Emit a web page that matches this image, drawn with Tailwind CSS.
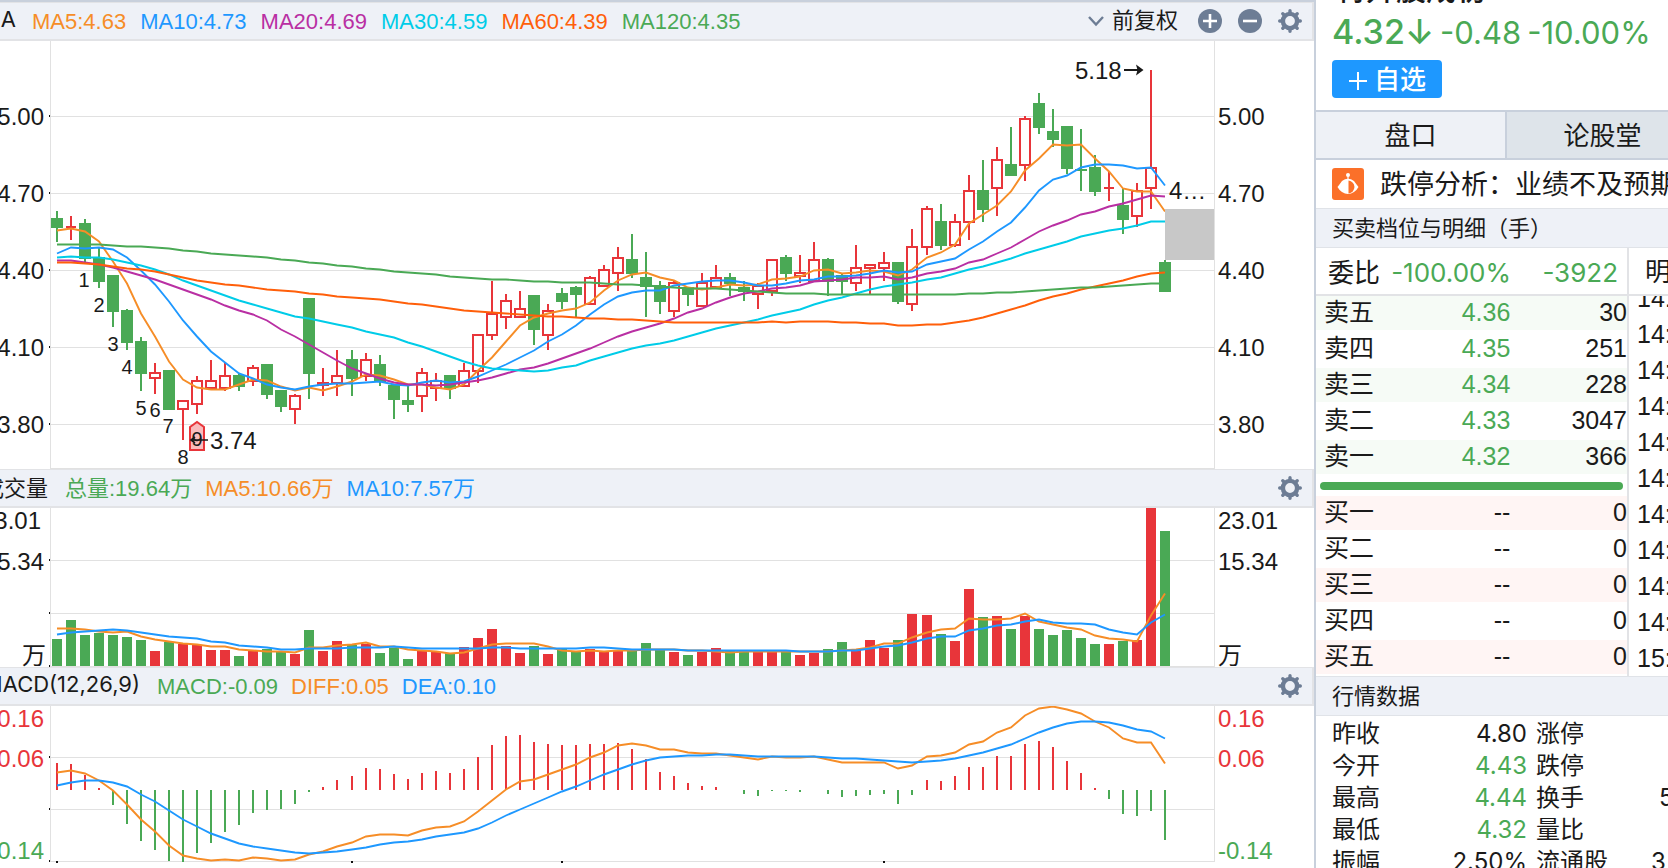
<!DOCTYPE html>
<html lang="zh-CN">
<head>
<meta charset="utf-8">
<title>4.32 -10.00%</title>
<script src="https://cdn.jsdelivr.net/npm/@tailwindcss/browser@4"></script>
</head>
<body class="h-screen overflow-hidden bg-white text-[#1a1a1a] font-['Liberation_Sans','Noto_Sans_CJK_SC',sans-serif]">
<svg class="hidden" aria-hidden="true">
  <symbol id="gear" viewBox="0 0 24 24">
    <circle cx="12" cy="12" r="7.1" fill="none" stroke="#6d7d95" stroke-width="4.4"/>
    <g stroke="#6d7d95" stroke-width="3.4" stroke-linecap="round">
      <path d="M12 1.700V4M12 20v2.300M1.700 12H4M20 12h2.300M4.800 4.800l1.500 1.500M17.700 17.700l1.500 1.500M4.800 19.200l1.500-1.500M17.700 6.300l1.500-1.500"/>
    </g>
  </symbol>
</svg>
<div class="flex h-full">
  <main class="min-w-0 flex-1 border-t-2 border-[#c8d0dc]">
    <header class="flex h-[39px] items-center border-t border-r-2 border-b-2 border-[#e2e3e6] bg-[#eef1f7] pr-[10px] text-[22px]">
      <h2 class="flex w-4 justify-end overflow-hidden pb-[3px] font-['Inter','Noto_Sans_CJK_SC',sans-serif]">MA</h2>
      <div class="ml-4 flex flex-1 gap-[14px] whitespace-nowrap">
        <span class="text-[#f68d27]">MA5:4.63</span>
        <span class="text-[#1e98ff]">MA10:4.73</span>
        <span class="text-[#b92fa3]">MA20:4.69</span>
        <span class="text-[#00cce8]">MA30:4.59</span>
        <span class="text-[#ff5f0a]">MA60:4.39</span>
        <span class="text-[#4aa955]">MA120:4.35</span>
      </div>
      <button class="flex items-center gap-2 leading-[30px]">
        <svg class="h-3 w-4" viewBox="0 0 16 12" fill="none" stroke="#6d7d95" stroke-width="2.4"><path d="M1 2l7 7.500L15 2"/></svg>前复权
      </button>
      <button class="ml-5" aria-label="放大"><svg class="h-6 w-6" viewBox="0 0 24 24"><circle cx="12" cy="12" r="12" fill="#6d7d95"/><path d="M5 12h14M12 5v14" stroke="#fff" stroke-width="2.600"/></svg></button>
      <button class="ml-4" aria-label="缩小"><svg class="h-6 w-6" viewBox="0 0 24 24"><circle cx="12" cy="12" r="12" fill="#6d7d95"/><path d="M5 12h14" stroke="#fff" stroke-width="2.600"/></svg></button>
      <button class="ml-4" aria-label="设置"><svg class="h-6 w-6"><use href="#gear"/></svg></button>
    </header>
    <svg id="price" class="block w-full" viewBox="0 41 1314 428" font-size="24" fill="#1a1a1a"></svg>

    <header class="flex h-[39px] items-center border-t border-r-2 border-b-2 border-[#e2e3e6] bg-[#eef1f7] pr-[10px] text-[22px]">
      <h2 class="flex w-12 justify-end overflow-hidden whitespace-nowrap">成交量</h2>
      <div class="ml-[17px] flex flex-1 gap-[13px] whitespace-nowrap">
        <span class="text-[#4aa955]">总量:19.64万</span>
        <span class="text-[#f68d27]">MA5:10.66万</span>
        <span class="text-[#1e98ff]">MA10:7.57万</span>
      </div>
      <button aria-label="设置"><svg class="h-6 w-6"><use href="#gear"/></svg></button>
    </header>
    <svg id="volume" class="block w-full" viewBox="0 508 1314 159" font-size="24" fill="#1a1a1a"></svg>

    <header class="flex h-[39px] items-center border-t border-r-2 border-b-2 border-[#e2e3e6] bg-[#eef1f7] pr-[10px] text-[22px]">
      <h2 class="flex w-[140px] justify-end overflow-hidden pb-[3px] whitespace-nowrap font-['Inter','Noto_Sans_CJK_SC',sans-serif]">MACD(12,26,9)</h2>
      <div class="ml-[17px] flex flex-1 gap-[13px] whitespace-nowrap">
        <span class="text-[#4aa955]">MACD:-0.09</span>
        <span class="text-[#f68d27]">DIFF:0.05</span>
        <span class="text-[#1e98ff]">DEA:0.10</span>
      </div>
      <button aria-label="设置"><svg class="h-6 w-6"><use href="#gear"/></svg></button>
    </header>
    <svg id="macd" class="block w-full" viewBox="0 706 1314 162" font-size="24" fill="#1a1a1a"></svg>
  </main>

  <aside class="w-[354px] shrink-0 overflow-hidden border-l-2 border-[#c8d0dc]">
    <div class="flex h-[110px] flex-col px-4 whitespace-nowrap">
      <h1 class="flex h-[3px] items-end overflow-hidden pl-1 text-[30px] leading-[26px] font-medium">特升股成初</h1>
      <div class="mt-[7px] flex items-baseline gap-[6px] font-['Inter','Noto_Sans_CJK_SC',sans-serif] leading-[44px] text-[#4aa955]">
        <span class="text-[34px] font-medium">4.32↓</span>
        <span class="text-[31px]">-0.48</span>
        <span class="text-[31px]">-10.00%</span>
      </div>
      <button class="mt-[5px] flex h-[38px] w-[110px] items-center justify-center gap-[6px] rounded bg-[#1e98ff] pt-[3px] text-[26px] leading-[35px] font-medium text-white">
        <svg class="h-5 w-5" viewBox="0 0 20 20" stroke="#fff" stroke-width="2"><path d="M1 10h18M10 1v18"/></svg>自选
      </button>
    </div>
    <nav class="flex border-y-2 border-[#c8d0dc] text-[26px] leading-[44px]">
      <a href="#" class="w-[191px] shrink-0 border-r-2 border-[#c8d0dc] bg-[#eef1f6] pt-[2px] text-center">盘口</a>
      <a href="#" class="w-[191px] shrink-0 bg-[#dee4ea] pt-[2px] text-center">论股堂</a>
    </nav>
    <a href="#" class="flex h-12 items-center gap-4 px-4 text-[27px] leading-10 whitespace-nowrap">
      <svg class="h-8 w-8 shrink-0" viewBox="0 0 32 32"><rect width="32" height="32" rx="3" fill="#fb7029"/><circle cx="16" cy="7" r="2" fill="#fff"/><path d="M16 7v5" stroke="#fff" stroke-width="1.200"/><path d="M10 13q6-4.500 12 0 2.500 3.500 4.500 6-2 3.500-4.500 5-6 4-12 0-2.500-1.500-4.500-5 2-2.500 4.500-6z" fill="#fff"/><path d="M16.500 12.500q5.500 1 6 6.500-.5 5.500-6 6.500z" fill="#fb7029"/></svg>
      <span class="pt-[2px]">跌停分析：业绩不及预期</span>
    </a>
    <h3 class="h-10 border-y border-[#e0e3e8] bg-[#eef1f7] px-4 text-[22px] leading-10 whitespace-nowrap">买卖档位与明细（手）</h3>
    <div class="flex whitespace-nowrap">
      <section class="w-[313px] shrink-0 border-r-2 border-[#e2e3e6]">
        <div class="flex h-12 items-center border-b-2 border-[#e2e3e6] pt-[3px] pr-[9px] pl-3 font-['Inter','Noto_Sans_CJK_SC',sans-serif] text-[26px] leading-[43px]">
          <span>委比</span><span class="flex-1 text-right text-[#4aa955]">-100.00%</span><span class="w-[107px] text-right text-[#4aa955]">-3922</span>
        </div>
        <table class="w-full table-fixed text-[25px] leading-[32px]"><tbody id="asks"></tbody></table>
        <div class="mx-1 mt-[6px] mb-[6px] h-2 rounded-full bg-[#4aa955]"></div>
        <table class="w-full table-fixed text-[25px] leading-[32px]"><tbody id="bids"></tbody></table>
      </section>
      <section class="min-w-0 flex-1 overflow-hidden">
        <div class="h-12 border-b-2 border-[#e2e3e6] pt-[3px] pl-4 text-[26px] leading-[43px]">明细</div>
        <ol id="ticks" class="flex h-[380px] flex-col justify-end overflow-hidden pl-2 text-[25px] leading-9"></ol>
      </section>
    </div>
    <h3 class="h-10 border-y border-[#e0e3e8] bg-[#eef1f7] px-4 text-[22px] leading-10">行情数据</h3>
    <dl id="stats" class="grid grid-cols-[80px_115px_132px_100px] pt-[2px] pl-4 font-['Inter','Noto_Sans_CJK_SC',sans-serif] text-[24px] leading-8 whitespace-nowrap"></dl>
  </aside>
</div>
<script>
const R = '#e8353a', G = '#4aa955', O = '#f68d27', B = '#1e98ff';
const xs = i => 57 + 14 * i + (i > 20 ? 1 : 0) + (i > 61 ? 1 : 0);
const line = (ys, c) => `<polyline fill="none" stroke="${c}" stroke-width="1.9" points="${ys.map((y, i) => xs(i) + ',' + y).join(' ')}"/>`;
const rect = (x, y, w, h, c) => `<rect x="${x}" y="${y}" width="${w}" height="${h}" fill="${c}"/>`;
const text = (x, y, t, a = '') => `<text x="${x}" y="${y}" ${a}>${t}</text>`;
const n = s => s.trim().split(/\s+/).map(Number);
const frame = (top, h, rows) => rect(50, top, 1, h, '#e1e1e1') + rect(1214, top, 1, h, '#e1e1e1') + rows.map(y => rect(50, y, 1164, 1, '#e1e1e1') + rect(49, y - 1, 1, 2, '#111')).join('');

// candle: colour, high, body top, body bottom, low
const candles = `G 211 218 228 242|R 216 226 228 240|G 219 223 259 262|G 247 257 282 288|G 275 275 312 327|G 309 310 343 350|G 337 341 374 391|R 363 372 379 394|G 370 370 410 410|R 400 400 410 440|R 376 380 405 414|R 360 380 389 389|R 363 375 389 391|G 373 375 387 391|R 365 367 382 386|G 364 364 395 399|G 390 390 407 412|R 394 395 410 424|G 298 298 374 399|R 368 382 386 396|R 350 375 384 396|G 350 359 379 396|R 353 359 377 381|G 355 364 382 386|G 385 385 400 419|G 385 400 405 412|R 368 372 397 412|R 373 380 389 401|G 375 375 389 399|R 363 370 387 387|R 334 334 372 383|R 281 313 336 340|R 294 300 318 329|R 291 308 318 318|G 295 295 330 345|R 304 310 336 350|G 288 293 302 309|G 286 287 295 317|R 276 277 305 305|R 265 269 287 287|R 247 257 274 291|G 234 259 274 278|G 252 277 287 317|G 281 285 302 314|R 281 282 312 317|G 287 287 295 306|R 273 282 307 307|R 265 277 288 288|G 273 277 284 296|G 281 287 292 301|R 283 285 295 309|R 259 259 292 296|G 255 257 274 281|R 255 272 277 283|R 242 259 282 282|G 258 259 282 296|G 273 275 282 295|R 245 267 284 291|R 264 264 269 294|R 252 262 269 281|G 262 262 302 304|R 229 246 305 311|R 206 208 248 255|G 204 221 246 250|R 214 221 246 247|R 175 190 223 240|G 160 190 210 222|R 147 159 189 216|G 127 164 176 176|R 116 118 166 181|G 93 103 128 134|G 109 131 140 147|G 126 126 169 174|G 129 169 171 191|G 155 167 192 196|R 172 187 189 201|G 188 205 220 234|R 183 190 217 227|R 70 167 189 209|G 260 262 292 292`
  .split('|').map(s => { const p = s.split(' '); return [p[0] === 'R' ? R : G, ...p.slice(1).map(Number)]; });

const ma5 = n('230 228 231 241 261 283 313 336 361 379 387 389 389 384 379 380 386 390 387 390 386 381 374 375 379 384 384 387 389 384 370 357 341 325 317 313 310 308 302 290 280 274 272 277 280 287 289 287 284 285 284 279 278 276 270 269 273 272 270 271 275 269 257 252 244 223 214 205 191 170 158 144 145 144 158 171 188 191 191 211');
const ma10 = n('253 247 248 247 249 257 270 284 301 320 336 351 362 373 378 384 387 389 386 384 383 383 382 381 384 385 382 380 382 381 376 370 364 357 350 341 334 325 314 304 296 292 290 290 285 283 281 280 280 282 285 285 283 280 279 276 276 275 273 270 272 271 264 261 258 249 241 231 222 207 190 179 175 167 164 164 165 168 167 185');
const ma20 = n('260 260 262 264 267 271 275 279 284 289 294 299 305 310 314 320 329 336 344 352 360 368 373 378 382 384 384 385 384 382 380 377 373 369 367 363 358 353 348 342 336 331 327 323 318 312 308 302 297 293 291 288 287 285 281 280 279 277 277 276 279 277 273 271 268 262 259 253 247 239 231 225 220 214 211 206 203 199 195 196');
const ma30 = n('257 256 257 257 259 262 265 269 274 280 285 290 295 300 304 308 312 316 318 321 324 327 331 334 337 342 346 351 356 361 365 368 369 370 371 370 367 365 360 356 352 348 345 343 340 336 332 328 325 322 319 315 312 309 304 300 297 293 289 286 284 282 279 277 273 269 266 262 258 253 249 245 241 236 233 230 228 225 221 221');
const ma60 = n('262 262 263 264 266 268 269 271 274 277 280 282 284 285 287 289 290 291 293 294 296 297 298 299 301 303 304 306 308 310 311 312 313 314 315 316 316 317 318 318 319 319 320 321 322 322 322 322 322 322 322 321 322 321 321 321 322 322 323 323 325 325 324 324 322 320 317 313 309 305 300 296 293 289 286 283 280 276 273 272');
const ma120 = n('244 244 244 244 245 246 246 247 248 250 251 253 254 255 256 257 259 260 262 263 265 266 268 269 271 272 273 274 276 277 278 279 279 280 281 281 282 282 282 283 284 284 285 286 287 288 288 288 289 290 291 292 293 293 293 294 294 294 294 294 294 294 294 294 294 293 293 292 292 291 290 289 288 287 287 286 285 284 283 283');

let s = frame(41, 428, [116, 193, 270, 347, 424]) + rect(50, 468, 1164, 1, '#e1e1e1');
candles.forEach(([c, h, t, b, l], i) => {
  const x = xs(i);
  if (c === R && b - t > 2) {
    s += rect(x - 1, h, 2, t - h, c) + rect(x - 1, b, 2, l - b, c) + `<rect x="${x - 5}" y="${t + 1}" width="10" height="${b - t - 2}" fill="#fff" stroke="${c}" stroke-width="2"/>`;
  } else {
    s += rect(x - 1, h, 2, l - h, c) + rect(c === R ? x - 5 : x - 6, t, c === R ? 10 : 12, b - t, c);
  }
});
s += `<g transform="translate(0 .5)">${line(ma5, O)}${line(ma10, B)}${line(ma20, '#b92fa3')}${line(ma30, '#00cce8')}${line(ma60, '#ff5f0a')}${line(ma120, G)}</g>`;
s += rect(1165, 209, 49, 51, '#c8c8c8');
['5.00', '4.70', '4.40', '4.10', '3.80'].forEach((t, i) => { s += text(44, 125 + 77 * i, t, 'text-anchor="end"') + text(1218, 125 + 77 * i, t); });
s += `<path d="M190 427l7-5 7 5v23h-14z" fill="#f9bcbd" stroke="${R}" stroke-width="2"/><path d="M191 440h17M195 437l-4 3 4 3" fill="none" stroke="#1a1a1a" stroke-width="1.6"/>`;
[[84, 287], [99, 312], [113, 351], [127, 374], [141, 415], [155, 417], [168, 433], [183, 464], [197, 446]].forEach(([x, y], i) => { s += text(x, y, i + 1, 'font-size="20" text-anchor="middle"'); });
s += text(210, 449, '3.74') + text(1075, 79, '5.18') + text(1169, 199, '4…');
s += '<path d="M1124 70h17" stroke="#1a1a1a" stroke-width="2"/><path d="M1136 64.500l7.500 5.500-7.500 5.500 1.500-5.500z"/>';
document.getElementById('price').innerHTML = s;

const vol = n('639 620 635 633 635 637 640 651 642 644 645 650 650 656 651 649 652 654 630 651 641 645 644 653 648 659 651 652 653 647 638 629 646 653 646 654 649 651 649 651 651 650 643 650 652 655 652 648 651 652 650 651 650 655 653 649 642 649 640 648 640 614 615 634 641 589 617 616 629 616 629 635 630 638 644 644 641 640 508 531');
const v5 = n('628 628 629 631 632 631 636 639 641 643 644 646 646 649 650 651 651 652 647 647 645 644 642 646 646 649 650 651 653 652 648 644 643 643 643 646 650 651 650 651 650 650 649 649 649 650 650 651 652 651 651 651 651 651 651 651 650 649 647 643 643 637 632 629 628 618 619 619 618 613 621 624 627 629 635 638 639 641 615 593');
const v10 = n('634 632 631 630 629 630 632 634 636 637 638 641 642 645 646 647 649 649 648 648 648 647 647 647 646 647 648 648 648 648 648 647 647 648 648 648 648 648 647 647 648 649 649 649 649 650 650 650 650 650 650 650 650 651 651 651 650 650 648 646 645 642 638 636 636 630 628 625 624 621 619 622 623 623 624 629 632 634 622 614');
s = frame(508, 159, [560, 613, 666]);
vol.forEach((y, i) => { s += rect(xs(i) - 5, y, 10, 666 - y, i === 1 ? G : candles[i][0]); });
s += `<g transform="translate(0 .5)">${line(v5, O)}${line(v10, B)}</g>`;
s += text(41, 529, '23.01', 'text-anchor="end"') + text(44, 570, '15.34', 'text-anchor="end"') + text(46, 664, '万', 'text-anchor="end"');
s += text(1218, 529, '23.01') + text(1218, 570, '15.34') + text(1218, 664, '万');
document.getElementById('volume').innerHTML = s;

const bars = n('763 764 775 788 805 824 841 850 861 862 853 843 832 825 813 810 809 804 792 787 780 776 768 769 774 779 773 771 773 769 757 745 736 735 742 744 745 745 744 744 743 749 759 772 776 783 786 787 790 794 796 791 791 792 790 794 797 796 795 794 804 795 780 781 776 767 767 756 756 744 741 747 761 773 788 799 814 816 811 840');
const diff = n('772 770 773 780 790 804 819 831 845 855 858 860 859 860 857 858 860 859 854 851 846 842 836 834 834 835 830 827 826 821 811 800 789 781 779 774 769 764 757 752 745 743 745 749 749 752 753 753 755 757 759 756 757 757 756 759 762 762 762 762 768 765 756 755 752 744 741 732 727 715 708 706 709 713 721 727 738 742 742 763');
const dea = n('785 782 780 780 782 786 794 801 810 819 826 833 838 843 846 848 850 852 853 852 851 849 847 844 842 841 839 836 834 832 828 822 815 809 803 797 791 786 780 774 769 764 760 757 756 755 755 754 754 755 756 756 756 756 756 757 758 758 759 760 761 762 761 760 758 755 752 748 744 738 732 727 723 721 721 722 725 729 731 738');
s = frame(706, 156, [757, 809, 861]);
bars.forEach((y, i) => { s += rect(xs(i) - 1, Math.min(y, 790), 2, Math.abs(y - 790), y < 790 ? R : G); });
[0, 21, 36, 59].forEach(i => { s += rect(xs(i) - 1, 861, 2, 2, '#111'); });
s += `<g transform="translate(0 .5)">${line(diff, O)}${line(dea, B)}</g>`;
[['0.16', 727, R], ['0.06', 767, R], ['-0.14', 859, G]].forEach(([t, y, c]) => { s += text(44, y, t, `text-anchor="end" style="fill:${c}"`) + text(1218, y, t, `style="fill:${c}"`); });
document.getElementById('macd').innerHTML = s;

const row = (tint, color) => ([k, p, q], i) => `<tr class="h-9"><th class="p-0 font-normal"><div class="mb-[2px] pb-[2px] pl-2 text-left ${i % 2 ? '' : tint}">${k}</div></th><td class="p-0"><div class="mb-[2px] pr-[13px] pb-[2px] text-right ${color} ${i % 2 ? '' : tint}">${p}</div></td><td class="p-0"><div class="mb-[2px] pb-[2px] text-right ${i % 2 ? '' : tint}">${q}</div></td></tr>`;
document.getElementById('asks').innerHTML = [['卖五', '4.36', 30], ['卖四', '4.35', 251], ['卖三', '4.34', 228], ['卖二', '4.33', 3047], ['卖一', '4.32', 366]].map(row('bg-[#f6fbf6]', 'text-[#4aa955]')).join('');
document.getElementById('bids').innerHTML = [['买一', '--', 0], ['买二', '--', 0], ['买三', '--', 0], ['买四', '--', 0], ['买五', '--', 0]].map(row('bg-[#fff5f4]', 'text-[#1a1a1a]')).join('');
document.getElementById('ticks').innerHTML = [...Array(10).fill('14:'), '15:'].map(t => `<li class="shrink-0">${t}</li>`).join('');
document.getElementById('stats').innerHTML = [['昨收', '4.80', '', '涨停', ''], ['今开', '4.43', 'text-[#4aa955]', '跌停', ''], ['最高', '4.44', 'text-[#4aa955]', '换手', '5'], ['最低', '4.32', 'text-[#4aa955]', '量比', ''], ['振幅', '2.50%', '', '流通股', '3']].map(([a, b, c, d, e]) => `<dt>${a}</dt><dd class="text-right ${c}">${b}</dd><dt class="pl-[9px]">${d}</dt><dd class="${e === '3' ? '-ml-2' : ''}">${e}</dd>`).join('');
</script>
</body>
</html>
